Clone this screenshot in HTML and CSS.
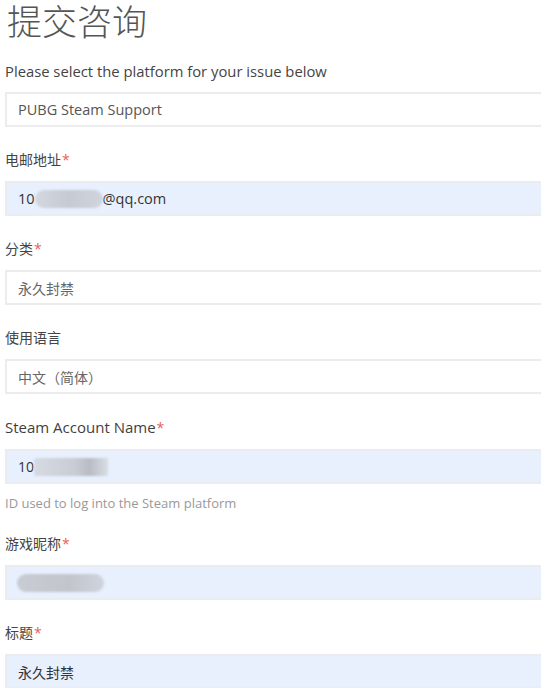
FILE: index.html
```html
<!DOCTYPE html>
<html lang="zh">
<head>
<meta charset="utf-8">
<title>提交咨询</title>
<link rel="stylesheet" href="styles.css">
</head>
<body>
<div class="page">
  <h1 class="title">提交咨询</h1>

  <div class="group">
    <div class="label latin">Please select the platform for your issue below</div>
    <div class="field latin-value">PUBG Steam Support</div>
  </div>

  <div class="group">
    <div class="label">电邮地址<span class="req">*</span></div>
    <div class="field filled latin-value">10<span class="blur blur-email"></span>@qq.com</div>
  </div>

  <div class="group">
    <div class="label">分类<span class="req">*</span></div>
    <div class="field muted">永久封禁</div>
  </div>

  <div class="group">
    <div class="label">使用语言</div>
    <div class="field muted">中文（简体）</div>
  </div>

  <div class="group">
    <div class="label latin-strong">Steam Account Name<span class="req">*</span></div>
    <div class="field filled">10<span class="blur blur-account"></span></div>
    <div class="hint">ID used to log into the Steam platform</div>
  </div>

  <div class="group">
    <div class="label">游戏昵称<span class="req">*</span></div>
    <div class="field filled"><span class="blur blur-nick"></span></div>
  </div>

  <div class="group">
    <div class="label">标题<span class="req">*</span></div>
    <div class="field filled">永久封禁</div>
  </div>
</div>
</body>
</html>
```

FILE: styles.css
```css
html, body {
  margin: 0;
  padding: 0;
  background: #ffffff;
  overflow: hidden;
}

body {
  font-family: "Open Sans", "Noto Sans CJK SC", sans-serif;
  font-size: 14px;
  color: #555555;
}

.page {
  padding-left: 5px;
}

.title {
  margin: 0 0 19px 2px;
  padding-top: 2px;
  font-size: 35px;
  line-height: 40px;
  font-weight: 300;
  color: #555555;
}

.group {
  margin-bottom: 23px;
}

.label {
  line-height: 20px;
  margin-bottom: 11px;
  color: #444444;
}

.label.latin {
  font-size: 14.8px;
}

.label.latin-strong {
  font-size: 15px;
  color: #3f3f3f;
}

.req {
  color: #e8605c;
  margin-left: 1px;
  font-size: 14px;
}

.field {
  box-sizing: border-box;
  height: 35px;
  margin-right: -40px;
  border: 2px solid #ececec;
  background: #ffffff;
  padding: 0 11px;
  display: flex;
  align-items: center;
  color: #555555;
  white-space: nowrap;
}

.field.latin-value {
  font-size: 14.5px;
}

.field.muted {
  color: #666666;
}

.field.filled {
  background: #e8f0fe;
  border-color: #e9edf2;
  color: #333333;
}

.blur {
  display: inline-block;
  height: 18px;
  border-radius: 9px;
  background: linear-gradient(90deg, #d3d8e0, #c6cad2 50%, #d0d4dc);
  filter: blur(1px);
}

.blur-email {
  width: 68px;
}

.blur-account {
  width: 74px;
  border-radius: 2px;
  background: linear-gradient(90deg, #d6dbe3, #c9ccd3 55%, #b9bcc2 75%, #d9dde5);
}

.blur-nick {
  width: 87px;
  margin-left: -1px;
  background: linear-gradient(90deg, #c9ccd3, #c2c5cc 60%, #cfd4dd);
}

.hint {
  margin-top: 11px;
  line-height: 16px;
  color: #999999;
  font-size: 13px;
}
```
